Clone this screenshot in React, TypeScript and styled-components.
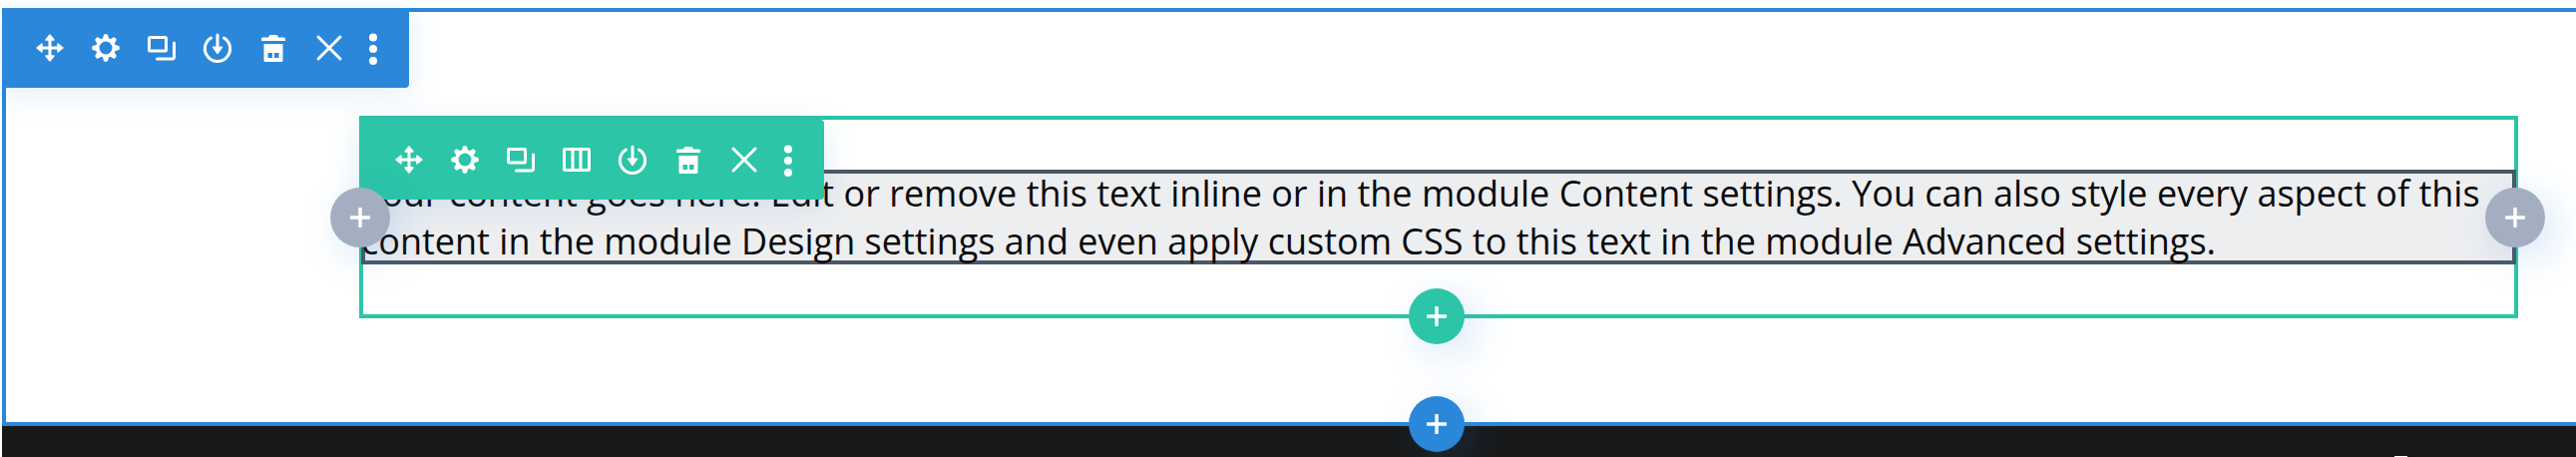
import { styled, createGlobalStyle } from "styled-components";

const GlobalStyle = createGlobalStyle`
  html, body {
    margin: 0;
    background: #fff;
    overflow: hidden;
  }
`;

const MoveIcon = () => (
  <Icon viewBox="0 0 28 28">
    <path d="M14 3V25M3 14H25" stroke="#fff" strokeWidth="3" fill="none" />
    <path
      d="M14 1L18 6H10ZM14 27L18 22H10ZM1 14L6 10V18ZM27 14L22 10V18Z"
      fill="#fff"
      stroke="#fff"
      strokeWidth="1.5"
      strokeLinejoin="round"
    />
  </Icon>
);

const GearIcon = () => (
  <Icon viewBox="0 0 28 28">
    <circle cx="14" cy="14" r="8.25" stroke="#fff" strokeWidth="3.5" fill="none" />
    {[0, 45, 90, 135, 180, 225, 270, 315].map((angle) => (
      <path
        key={angle}
        d="M10.5 6L12 1Q12.2 0.3 13 0.3H15Q15.8 0.3 16 1L17.5 6Z"
        fill="#fff"
        transform={`rotate(${angle} 14 14)`}
      />
    ))}
  </Icon>
);

const DuplicateIcon = () => (
  <Icon viewBox="0 0 28 28">
    <rect x="1.5" y="3.5" width="17" height="13.5" rx="1" stroke="#fff" strokeWidth="3" fill="none" />
    <path d="M26.5 9V23.5a1.5 1.5 0 0 1-1.5 1.5H9.5" stroke="#fff" strokeWidth="3" strokeLinecap="round" fill="none" />
  </Icon>
);

const ColumnsIcon = () => (
  <Icon viewBox="0 0 28 28">
    <rect x="1.5" y="3.5" width="25" height="21" rx="1" stroke="#fff" strokeWidth="3" fill="none" />
    <path d="M10 3V25M18 3V25" stroke="#fff" strokeWidth="3" fill="none" />
  </Icon>
);

const SaveIcon = () => (
  <Icon viewBox="0 0 28 28">
    <path d="M7.5 4A12.6 12.6 0 1 0 20.5 4" stroke="#fff" strokeWidth="3" strokeLinecap="round" fill="none" />
    <path d="M14 1V14" stroke="#fff" strokeWidth="3" strokeLinecap="round" fill="none" />
    <path d="M9 13H19L14 20Z" fill="#fff" stroke="#fff" strokeLinejoin="round" />
  </Icon>
);

const TrashIcon = () => (
  <Icon viewBox="0 0 28 28">
    <path
      fillRule="evenodd"
      fill="#fff"
      d="M11 1H17Q18.5 1 19 3.5H25Q26 3.5 26 5V7H2V5Q2 3.5 3 3.5H9Q9.5 1 11 1ZM4.5 10H23.5V26.5Q23.5 28 22 28H6Q4.5 28 4.5 26.5ZM8.5 19V24H13V19ZM15 19V24H19.5V19Z"
    />
  </Icon>
);

const CloseIcon = () => (
  <Icon viewBox="0 0 28 28">
    <path d="M3 3L25 25M25 3L3 25" stroke="#fff" strokeWidth="3" strokeLinecap="round" fill="none" />
  </Icon>
);

const MoreIcon = () => (
  <MoreSvg viewBox="0 0 28 28">
    <circle cx="14" cy="3.5" r="4" fill="#fff" />
    <circle cx="14" cy="15" r="4" fill="#fff" />
    <circle cx="14" cy="27" r="4" fill="#fff" />
  </MoreSvg>
);

const PlusIcon = () => (
  <PlusSvg viewBox="0 0 20 20">
    <path d="M10 1V19M1 10H19" stroke="#fff" strokeWidth="3.4" strokeLinecap="round" fill="none" />
  </PlusSvg>
);

const App = () => {
  return (
    <Page>
      <GlobalStyle />
      <Section>
        <SectionBar>
          <MoveIcon />
          <GearIcon />
          <DuplicateIcon />
          <SaveIcon />
          <TrashIcon />
          <CloseIcon />
          <MoreIcon />
        </SectionBar>
        <Row>
          <RowBar>
            <MoveIcon />
            <GearIcon />
            <DuplicateIcon />
            <ColumnsIcon />
            <SaveIcon />
            <TrashIcon />
            <CloseIcon />
            <MoreIcon />
          </RowBar>
          <Module>
            Your content goes here. Edit or remove this text inline or in the module Content settings. You can also
            style every aspect of this content in the module Design settings and even apply custom CSS to this text in
            the module Advanced settings.
          </Module>
          <SideAdd $side="left">
            <PlusIcon />
          </SideAdd>
          <SideAdd $side="right">
            <PlusIcon />
          </SideAdd>
          <RowAdd>
            <PlusIcon />
          </RowAdd>
        </Row>
        <SectionAdd>
          <PlusIcon />
        </SectionAdd>
      </Section>
      <Footer>
        <FooterSpeck />
      </Footer>
    </Page>
  );
};

export default App;

const Page = styled.div`
  width: 2582px;
  height: 458px;
  padding: 8px 0 0 2px;
  box-sizing: border-box;
  display: flex;
  flex-direction: column;
  overflow: hidden;
`;

const Section = styled.div`
  position: relative;
  height: 419px;
  padding: 104px 0 0 354px;
  box-sizing: border-box;
  border: 4px solid #2b87da;
  border-right: 0;
  background: #fff;
`;

const Icon = styled.svg`
  width: 28px;
  height: 28px;
  flex: none;
  overflow: visible;
`;

const MoreSvg = styled(Icon)`
  margin-left: -12px;
`;

const PlusSvg = styled.svg`
  width: 20px;
  height: 20px;
`;

const Toolbar = styled.div`
  position: absolute;
  z-index: 3;
  display: flex;
  align-items: center;
  gap: 28px;
  box-sizing: border-box;
  box-shadow: 0 5px 30px rgba(43, 135, 218, 0.15);
`;

const SectionBar = styled(Toolbar)`
  top: -4px;
  left: -4px;
  width: 408px;
  height: 80px;
  padding-left: 34px;
  background: #2b87da;
  border-radius: 0 0 4px 0;
`;

const RowBar = styled(Toolbar)`
  top: 0;
  left: -4px;
  width: 466px;
  height: 80px;
  padding-left: 36px;
  background: #2cc5a7;
  border-radius: 0 4px 4px 4px;
`;

const Row = styled.div`
  position: relative;
  width: 2164px;
  height: 203px;
  padding: 50px 0 0;
  box-sizing: border-box;
  border: 4px solid #2cc5a7;
`;

const Module = styled.div`
  margin: 0 0 0 -2px;
  width: 2160px;
  height: 95px;
  background: #edeef0;
  box-shadow: inset 0 0 0 4px #4c5866;
  color: #0b0b0c;
  font-family: "Open Sans", sans-serif;
  font-size: 36px;
  line-height: 48px;
`;

const AddButton = styled.div`
  position: absolute;
  z-index: 4;
  display: flex;
  align-items: center;
  justify-content: center;
  border-radius: 50%;
  box-shadow: 10px 10px 40px rgba(43, 135, 218, 0.2);
`;

const SideAdd = styled(AddButton)<{ $side: "left" | "right" }>`
  top: 68px;
  ${({ $side }) => ($side === "left" ? "left: -33px;" : "right: -31px;")}
  width: 60px;
  height: 60px;
  background: #a3afc1;
`;

const RowAdd = styled(AddButton)`
  left: 1048px;
  bottom: -30px;
  width: 56px;
  height: 56px;
  background: #2cc5a7;
`;

const SectionAdd = styled(AddButton)`
  left: 1406px;
  bottom: -30px;
  width: 56px;
  height: 56px;
  background: #2b87da;
`;

const Footer = styled.div`
  flex: 1;
  padding: 30px 0 0 2398px;
  box-sizing: border-box;
  background: #181818;
`;

const FooterSpeck = styled.div`
  width: 13px;
  height: 1px;
  background: #fff;
`;
